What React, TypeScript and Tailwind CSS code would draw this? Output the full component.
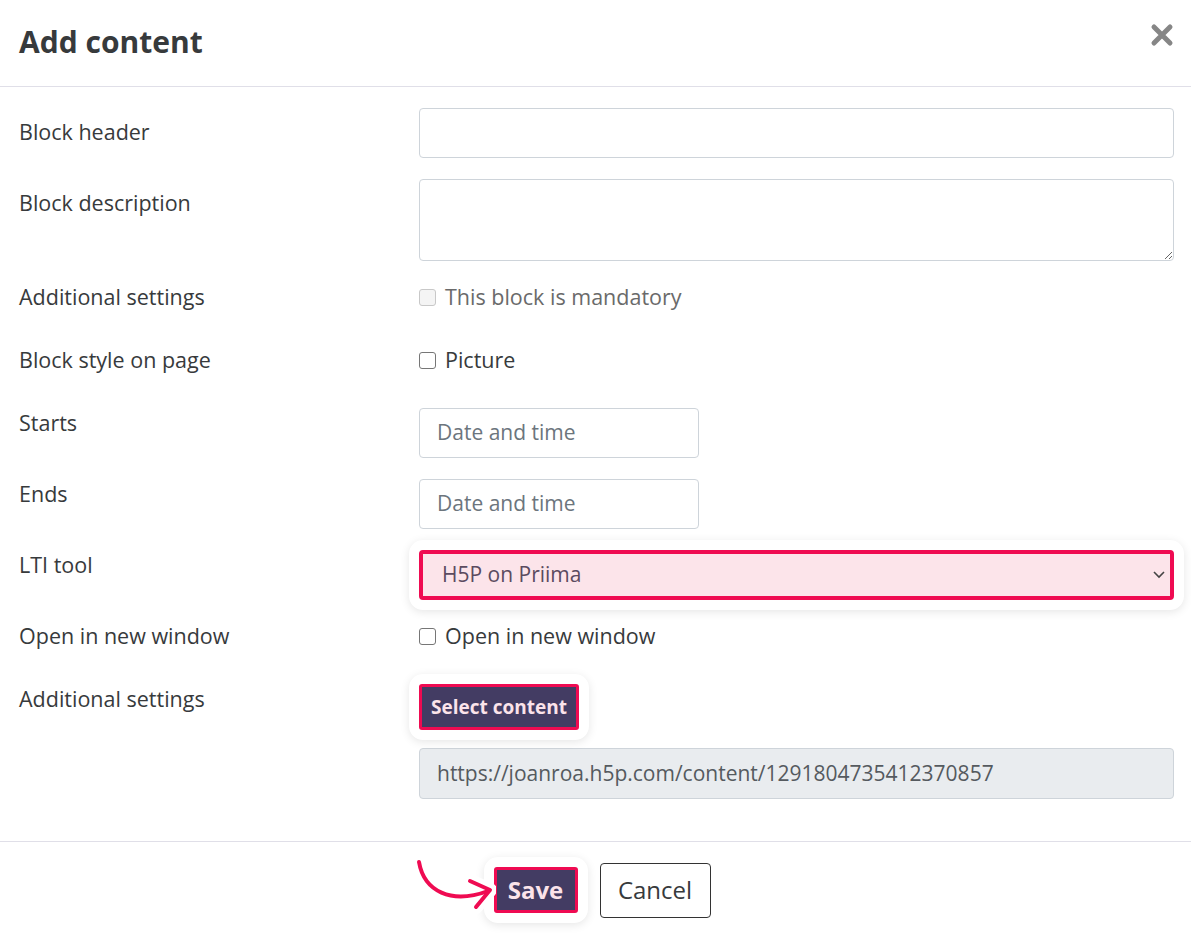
import React from 'react';

const font = { fontFamily: '"Open Sans", "Noto Sans", sans-serif' };

function Label({ children }: { children: React.ReactNode }) {
  return <div className="w-[400px] shrink-0 text-[21.5px] font-medium leading-[30px] text-[#373a3c]">{children}</div>;
}

function Check({ disabled }: { disabled?: boolean }) {
  return (
    <span
      className={`inline-block w-[17px] h-[17px] rounded-[3px] border mr-[9px] ${
        disabled ? 'border-[#c8c8c8] bg-[#f4f4f4]' : 'border-[#767676] bg-white'
      }`}
    />
  );
}

export default function App() {
  return (
    <div className="min-h-screen w-[1191px] bg-white text-[#373a3c]" style={font}>
      {/* Header */}
      <div className="h-[87px] border-b border-[#e0dfe8] flex items-center justify-between pl-[19px] pr-[17px]">
        <h1 className="text-[30px] font-bold text-[#373a3c] leading-none -mt-[2px]">Add content</h1>
        <svg width="24" height="24" viewBox="0 0 24 24" className="-mt-[16px]">
          <path d="M4 4 L20 20 M20 4 L4 20" stroke="#868686" strokeWidth="5" strokeLinecap="round" />
        </svg>
      </div>

      {/* Body */}
      <div className="pl-[19px] pr-[17px] pt-[21px] pb-[42px]">
        <div className="flex">
          <div className="pt-[9px]"><Label>Block header</Label></div>
          <div className="flex-1 h-[50px] border border-[#ced4da] rounded-[4px]" />
        </div>

        <div className="flex mt-[21px]">
          <div className="pt-[9px]"><Label>Block description</Label></div>
          <textarea className="flex-1 h-[82px] border border-[#ced4da] rounded-[4px] resize-y outline-none" />
        </div>

        <div className="flex mt-[21px] h-[30px] items-center">
          <Label>Additional settings</Label>
          <div className="flex items-center text-[21.5px] font-medium text-[#6a6a6a]">
            <Check disabled />
            This block is mandatory
          </div>
        </div>

        <div className="flex mt-[33px] h-[30px] items-center">
          <Label>Block style on page</Label>
          <div className="flex items-center text-[21.5px] font-medium text-[#373a3c]">
            <Check />
            Picture
          </div>
        </div>

        <div className="flex mt-[33px]">
          <div className="pt-0"><Label>Starts</Label></div>
          <div className="w-[280px] h-[50px] border border-[#ced4da] rounded-[4px] flex items-center pl-[17px] text-[21px] text-[#6c757d]">
            Date and time
          </div>
        </div>

        <div className="flex mt-[21px]">
          <div className="pt-0"><Label>Ends</Label></div>
          <div className="w-[280px] h-[50px] border border-[#ced4da] rounded-[4px] flex items-center pl-[17px] text-[21px] text-[#6c757d]">
            Date and time
          </div>
        </div>

        <div className="flex mt-[21px]">
          <div className="pt-0"><Label>LTI tool</Label></div>
          <div className="flex-1 -m-[10px] p-[10px] bg-white rounded-[14px] shadow-[0_2px_10px_rgba(0,0,0,0.10)]">
            <div className="h-[50px] border-[4px] border-[#ef0b52] rounded-[4px] bg-[#fce4ea] flex items-center justify-between pl-[19px] pr-[4px]">
              <span className="text-[21px] text-[#5b4b60]">H5P on Priima</span>
              <svg width="14" height="10" viewBox="0 0 14 10">
                <path d="M2 2 L7 7 L12 2" fill="none" stroke="#444" strokeWidth="1.6" />
              </svg>
            </div>
          </div>
        </div>

        <div className="flex mt-[21px] h-[30px] items-center">
          <Label>Open in new window</Label>
          <div className="flex items-center text-[21.5px] font-medium text-[#373a3c]">
            <Check />
            Open in new window
          </div>
        </div>

        <div className="flex mt-[33px]">
          <div className="pt-0"><Label>Additional settings</Label></div>
          <div className="flex-1">
            <div className="inline-block -m-[10px] p-[10px] bg-white rounded-[14px] shadow-[0_2px_10px_rgba(0,0,0,0.10)]">
              <div className="h-[46px] px-[9px] border-[3px] border-[#ef0b52] rounded-[3px] bg-[#433c63] flex items-center text-[19px] font-bold text-[#fbe3ea]">
                Select content
              </div>
            </div>
            <div className="mt-[18px] h-[51px] border border-[#ced4da] rounded-[4px] bg-[#e9ecef] flex items-center pl-[17px] text-[21px] text-[#555a5f]">
              https://joanroa.h5p.com/content/1291804735412370857
            </div>
          </div>
        </div>
      </div>

      {/* Footer */}
      <div className="relative border-t border-[#e0dfe8] h-[91px] pt-[6px] flex items-center justify-center">
        <div className="relative -ml-[3px] -mr-[6px] pl-[6px]">
          <svg width="90" height="75" viewBox="0 0 90 75" className="absolute -left-[72px] top-[-8px]">
            <g fill="none" strokeLinecap="round" strokeLinejoin="round">
              <path d="M13 13 C 18 42, 45 56, 82 42" stroke="white" strokeWidth="14" />
              <path d="M64 32 L 84 41 L 70 58" stroke="white" strokeWidth="14" />
              <path d="M13 13 C 18 42, 45 56, 82 42" stroke="#ef0b52" strokeWidth="4" />
              <path d="M64 32 L 84 41 L 70 58" stroke="#ef0b52" strokeWidth="4" />
            </g>
          </svg>
          <div className="p-[10px] bg-white rounded-[14px] shadow-[0_2px_10px_rgba(0,0,0,0.10)]">
            <div className="h-[46px] w-[84px] border-[3px] border-[#ef0b52] rounded-[3px] bg-[#433c63] flex items-center justify-center text-[24px] font-bold text-[#fbe3ea]">
              Save
            </div>
          </div>
        </div>
        <div className="ml-[18px] h-[55px] w-[111px] border border-[#333] rounded-[4px] flex items-center justify-center text-[24px] text-[#373a3c]">
          Cancel
        </div>
      </div>
    </div>
  );
}
